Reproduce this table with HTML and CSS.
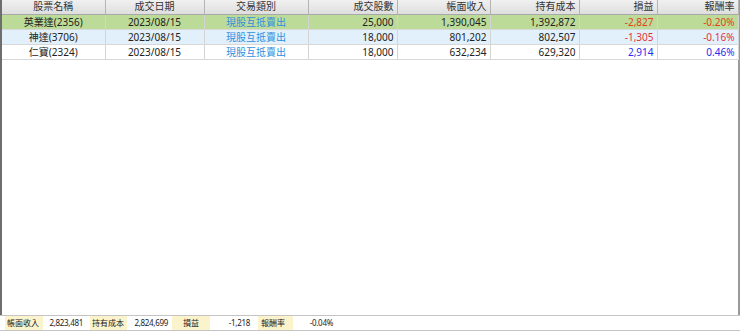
FILE: index.html
```
<!DOCTYPE html>
<html>
<head>
<meta charset="utf-8">
<link rel="stylesheet" href="styles.css">
</head>
<body>
<div class="grid">
  <table class="tbl">
    <colgroup>
      <col class="c1"><col class="c2"><col class="c3"><col class="c4"><col class="c5"><col class="c6"><col class="c7"><col class="c8">
    </colgroup>
    <thead>
      <tr>
        <th class="ctr">股票名稱</th>
        <th class="ctr">成交日期</th>
        <th class="ctr">交易類別</th>
        <th>成交股數</th>
        <th>帳面收入</th>
        <th>持有成本</th>
        <th>損益</th>
        <th>報酬率</th>
      </tr>
    </thead>
    <tbody>
      <tr class="r-green">
        <td class="ctr">英業達(2356)</td>
        <td class="ctr">2023/08/15</td>
        <td class="ctr type">現股互抵賣出</td>
        <td>25,000</td>
        <td>1,390,045</td>
        <td>1,392,872</td>
        <td class="neg-o">-2,827</td>
        <td class="neg-o">-0.20%</td>
      </tr>
      <tr class="r-blue">
        <td class="ctr">神達(3706)</td>
        <td class="ctr">2023/08/15</td>
        <td class="ctr type">現股互抵賣出</td>
        <td>18,000</td>
        <td>801,202</td>
        <td>802,507</td>
        <td class="neg">-1,305</td>
        <td class="neg">-0.16%</td>
      </tr>
      <tr class="r-white">
        <td class="ctr">仁寶(2324)</td>
        <td class="ctr">2023/08/15</td>
        <td class="ctr type">現股互抵賣出</td>
        <td>18,000</td>
        <td>632,234</td>
        <td>629,320</td>
        <td class="pos">2,914</td>
        <td class="pos">0.46%</td>
      </tr>
    </tbody>
  </table>
</div>
<div class="footer">
  <span class="lbl l1">帳面收入</span>
  <span class="val v1">2,823,481</span>
  <span class="lbl l2">持有成本</span>
  <span class="val v2">2,824,699</span>
  <span class="lbl l3">損益</span>
  <span class="val v3">-1,218</span>
  <span class="lbl l4">報酬率</span>
  <span class="val v4">-0.04%</span>
</div>
</body>
</html>
```
FILE: styles.css
```
html, body {
  margin: 0;
  padding: 0;
  background: #ffffff;
}
body {
  width: 740px;
  height: 331px;
  overflow: hidden;
  font-family: "Noto Sans", "Noto Sans CJK TC", sans-serif;
  font-size: 10px;
  color: #222;
}
.grid {
  height: 315px;
  box-sizing: border-box;
  border-left: 2px solid #6e6e6e;
  border-right: 2px solid #9a9a9a;
  background: #fff;
}
.tbl {
  border-collapse: collapse;
  table-layout: fixed;
  width: 736px;
}
.c1 { width: 103px; }
.c2 { width: 99px; }
.c3 { width: 104px; }
.c4 { width: 89px; }
.c5 { width: 93px; }
.c6 { width: 89px; }
.c7 { width: 78px; }
.c8 { width: 81px; }
th {
  height: 14px;
  padding: 0 3px;
  font-weight: normal;
  color: #333;
  text-align: right;
  background: linear-gradient(#f0f0f0, #dedede);
  border-right: 1px solid #b4b4b4;
  border-bottom: 1px solid #a8a8a8;
  line-height: 13px;
  white-space: nowrap;
  box-sizing: border-box;
}
td {
  height: 15px;
  padding: 0 3px;
  text-align: right;
  border-right: 1px solid #d4d4d4;
  border-bottom: 1px solid #d8d8d8;
  line-height: 14px;
  white-space: nowrap;
  box-sizing: border-box;
}
th.ctr, td.ctr { text-align: center; }
.r-green td { background: #bddb98; }
.r-blue td { background: #e2f0fb; }
.r-white td { background: #ffffff; }
.type { color: #2f8fe0; }
.neg-o { color: #e0401c; }
.neg { color: #e8303a; }
.pos { color: #2a2af0; }
.footer {
  height: 16px;
  box-sizing: border-box;
  border-top: 1px solid #c4c4c4;
  border-bottom: 1px solid #c4c4c4;
  display: flex;
  align-items: center;
  font-size: 8px;
  color: #222;
  line-height: 14px;
}
.lbl, .val {
  flex-shrink: 0;
  white-space: nowrap;
  box-sizing: border-box;
  height: 14px;
}
.lbl {
  background: #fbf3cc;
  padding-left: 2px;
}
.val { letter-spacing: -0.3px; }
.l1 { margin-left: 5px; width: 38px; }
.v1 { width: 42px; text-align: right; padding-right: 2px; }
.l2 { margin-left: 5px; width: 37px; }
.v2 { width: 41px; text-align: right; }
.l3 { margin-left: 4px; width: 38px; text-align: center; padding-left: 0; }
.v3 { width: 40px; text-align: right; }
.l4 { margin-left: 8px; width: 35px; padding-left: 3px; }
.v4 { width: 40px; text-align: right; }
```
